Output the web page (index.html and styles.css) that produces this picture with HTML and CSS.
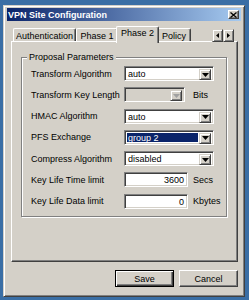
FILE: index.html
```html
<!DOCTYPE html>
<html lang="en">
<head>
    <meta charset="UTF-8">
    <title>VPN Site Configuration</title>
    <link rel="stylesheet" href="styles.css">
</head>
<body>
    <div class="window">
        <div class="titlebar">
            <span class="title">VPN Site Configuration</span>
            <span class="close">
                <svg width="7" height="6" viewBox="0 0 7 6"><path d="M0.5 0.5 L6.5 5.5 M6.5 0.5 L0.5 5.5" stroke="#000" stroke-width="1.3"/></svg>
            </span>
        </div>
        <div class="content">
            <div class="tabs">
                <div class="tab tab-auth">Authentication</div>
                <div class="tab tab-p1">Phase 1</div>
                <div class="tab tab-active">Phase 2</div>
                <div class="tab tab-policy">Policy</div>
                <div class="tab-scroll">
                    <span class="raised arrow-btn"><svg width="3" height="5" viewBox="0 0 3 5"><path d="M3 0 L0 2.5 L3 5 Z" fill="#000"/></svg></span>
                    <span class="raised arrow-btn"><svg width="3" height="5" viewBox="0 0 3 5"><path d="M0 0 L3 2.5 L0 5 Z" fill="#000"/></svg></span>
                </div>
            </div>
            <div class="panel">
                <div class="group">
                    <span class="group-title">Proposal Parameters</span>
                    <div class="form">
                        <span class="label">Transform Algorithm</span>
                        <div class="combo wide">
                            <span class="combo-text">auto</span>
                            <span class="raised drop-btn"><svg width="7" height="4" viewBox="0 0 7 4"><path d="M0 0 L7 0 L3.5 4 Z" fill="#000"/></svg></span>
                        </div>

                        <span class="label">Transform Key Length</span>
                        <div class="combo short disabled">
                            <span class="combo-text"></span>
                            <span class="raised drop-btn"><svg width="7" height="4" viewBox="0 0 7 4"><path d="M0 0 L7 0 L3.5 4 Z" fill="#a0a0a0"/></svg></span>
                        </div>
                        <span class="unit">Bits</span>

                        <span class="label">HMAC Algorithm</span>
                        <div class="combo wide">
                            <span class="combo-text">auto</span>
                            <span class="raised drop-btn"><svg width="7" height="4" viewBox="0 0 7 4"><path d="M0 0 L7 0 L3.5 4 Z" fill="#000"/></svg></span>
                        </div>

                        <span class="label">PFS Exchange</span>
                        <div class="combo wide">
                            <span class="combo-text selected">group 2</span>
                            <span class="raised drop-btn"><svg width="7" height="4" viewBox="0 0 7 4"><path d="M0 0 L7 0 L3.5 4 Z" fill="#000"/></svg></span>
                        </div>

                        <span class="label">Compress Algorithm</span>
                        <div class="combo wide">
                            <span class="combo-text">disabled</span>
                            <span class="raised drop-btn"><svg width="7" height="4" viewBox="0 0 7 4"><path d="M0 0 L7 0 L3.5 4 Z" fill="#000"/></svg></span>
                        </div>

                        <span class="label">Key Life Time limit</span>
                        <div class="edit">3600</div>
                        <span class="unit">Secs</span>

                        <span class="label">Key Life Data limit</span>
                        <div class="edit">0</div>
                        <span class="unit">Kbytes</span>
                    </div>
                </div>
            </div>
            <div class="actions">
                <button class="btn btn-default">Save</button>
                <button class="btn">Cancel</button>
            </div>
        </div>
    </div>
</body>
</html>
```

FILE: styles.css
```css
body {
    margin: 0;
    background: #3a6ea5;
    font-family: "Liberation Sans", Arial, sans-serif;
    font-size: 9px;
    color: #000;
}
.window {
    margin: 5px 4px 0 3px;
    height: 292px;
    box-sizing: border-box;
    background: #d4d0c8;
    border: 1px solid;
    border-color: #d4d0c8 #404040 #404040 #d4d0c8;
    box-shadow: inset 1px 1px #fff, inset -1px -1px #808080;
    padding: 2px 3px 3px 3px;
    display: flex;
    flex-direction: column;
}
.raised {
    box-sizing: border-box;
    background: #d4d0c8;
    border: 1px solid;
    border-color: #d4d0c8 #404040 #404040 #d4d0c8;
    box-shadow: inset 1px 1px #fff, inset -1px -1px #808080;
    display: flex;
    align-items: center;
    justify-content: center;
}
.titlebar {
    height: 13px;
    background: linear-gradient(to right, #0a246a, #a6caf0);
    display: flex;
    align-items: center;
    justify-content: space-between;
    padding: 0 2px 0 1px;
    color: #fff;
    font-weight: bold;
}
.close {
    width: 11px;
    height: 9px;
    box-sizing: border-box;
    background: #d4d0c8;
    border: 1px solid;
    border-color: #fff #404040 #404040 #fff;
    box-shadow: inset -1px -1px #808080;
    display: flex;
    align-items: center;
    justify-content: center;
}
.content {
    padding: 0 3px 0 4px;
}

/* tabs */
.tabs {
    display: flex;
    align-items: flex-end;
    height: 15px;
    margin-top: 7px;
    padding-left: 2px;
    margin-bottom: -2px;
    position: relative;
    z-index: 1;
}
.tab {
    box-sizing: border-box;
    height: 13px;
    margin-bottom: 2px;
    padding-top: 2px;
    line-height: 11px;
    text-align: center;
    background: #d4d0c8;
    border: 1px solid;
    border-color: #fff #404040 transparent #fff;
    border-bottom: none;
    border-radius: 2px 2px 0 0;
    box-shadow: inset -1px 0 #808080;
}
.tab-auth {
    width: 63px;
}
.tab-p1 {
    width: 42px;
}
.tab-active {
    width: 43px;
    height: 17px;
    margin: 0 -2px 0 -2px;
    padding-top: 1px;
    position: relative;
    z-index: 2;
}
.tab-policy {
    width: 34px;
}
.tab-scroll {
    display: flex;
    margin-left: auto;
    margin-right: 4px;
    align-self: flex-start;
    margin-top: 1px;
}
.arrow-btn {
    width: 11px;
    height: 13px;
}

/* panel */
.panel {
    height: 221px;
    box-sizing: border-box;
    border: 1px solid;
    border-color: #fff #404040 #404040 #fff;
    box-shadow: inset -1px -1px #808080;
    padding: 15px 10px 0 9px;
}
.group {
    position: relative;
    height: 160px;
    box-sizing: border-box;
    border: 1px solid #808080;
    box-shadow: inset 1px 1px #fff, 1px 1px #fff;
    padding: 8px 0 0 9px;
}
.group-title {
    position: absolute;
    top: -6px;
    left: 5px;
    padding: 0 2px;
    background: #d4d0c8;
    line-height: 11px;
}
.form {
    display: grid;
    grid-template-columns: 93px 69px auto;
    grid-auto-rows: 15px;
    row-gap: 6.3px;
    align-items: center;
}
.label {
    grid-column: 1;
}
.unit {
    grid-column: 3;
}
.combo, .edit {
    box-sizing: border-box;
    height: 15px;
    background: #fff;
    border: 1px solid;
    border-color: #808080 #fff #fff #808080;
    box-shadow: inset 1px 1px #404040, inset -1px -1px #d4d0c8;
    padding: 2px;
}
.combo {
    display: flex;
    grid-column: 2 / 4;
}
.combo.wide {
    width: 90px;
}
.combo.short {
    width: 61px;
    grid-column: 2;
}
.combo.disabled {
    background: #d4d0c8;
}
.combo-text {
    flex: 1;
    line-height: 11px;
    padding-left: 1px;
}
.combo-text.selected {
    background: #0a246a;
    color: #fff;
    margin-right: 1px;
}
.drop-btn {
    width: 12px;
    height: 11px;
}
.edit {
    width: 64px;
    line-height: 11px;
    text-align: right;
    padding-right: 3px;
}

/* buttons */
.actions {
    display: flex;
    justify-content: flex-end;
    gap: 5px;
    margin-top: 8px;
}
.btn {
    width: 59px;
    height: 17px;
    padding: 0;
    font-family: "Liberation Sans", Arial, sans-serif;
    font-size: 9px;
    color: #000;
    background: #d4d0c8;
    border: 1px solid;
    border-color: #fff #404040 #404040 #fff;
    box-shadow: inset -1px -1px #808080;
}
.btn-default {
    border-color: #000;
    box-shadow: inset 1px 1px #fff, inset -1px -1px #404040, inset -2px -2px #808080;
}
```
